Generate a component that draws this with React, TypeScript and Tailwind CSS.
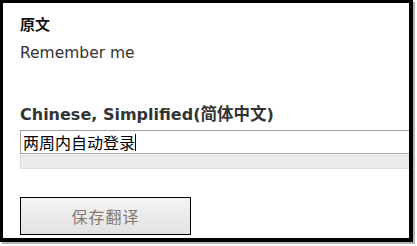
import React from "react";

export default function App() {
  return (
    <div className="w-[417px] h-[246px] bg-white relative overflow-hidden">
      <div
        className="w-[413px] h-[242px] border-l-[3px] border-t-[3px] border-r-4 border-b-4 border-black bg-white shadow-[2px_2px_0_#b4b4b4] overflow-hidden pl-[17px] text-[#222]"
        style={{ fontFamily: '"DejaVu Sans", "Noto Sans CJK SC", sans-serif' }}
      >
        <div className="mt-[12px] text-[15px] leading-[20px] font-bold text-[#111]">原文</div>
        <div className="mt-[8px] text-[15.5px] leading-[20px] text-[#333]">Remember me</div>
        <div className="mt-[40px] text-[16px] leading-[20px] font-bold text-[#333]">
          Chinese, Simplified(<span className="text-[16.5px]" style={{ fontFamily: '"Noto Sans CJK SC", sans-serif' }}>简体中文</span>)
        </div>
        <div className="mt-[5px] w-[420px] h-[24px] border border-[#a0a0a0] border-r-0 flex items-center pl-[2px]">
          <span className="text-[16px] leading-[20px] text-black" style={{ fontFamily: '"Noto Sans CJK SC", sans-serif' }}>两周内自动登录</span>
          <span className="w-px h-[17px] bg-black"></span>
        </div>
        <div className="mt-[1px] w-[420px] h-[14px] bg-[#ebebeb] border border-[#dcdcdc] border-r-0"></div>
        <button
          className="mt-[28px] w-[171px] h-[38px] border border-black bg-gradient-to-b from-[#f4f4f4] to-[#e2e2e2] text-[16px] text-[#85796e] flex items-center justify-center tracking-[1px]"
          style={{ fontFamily: '"Noto Sans CJK SC", sans-serif' }}
        >
          保存翻译
        </button>
      </div>
    </div>
  );
}
